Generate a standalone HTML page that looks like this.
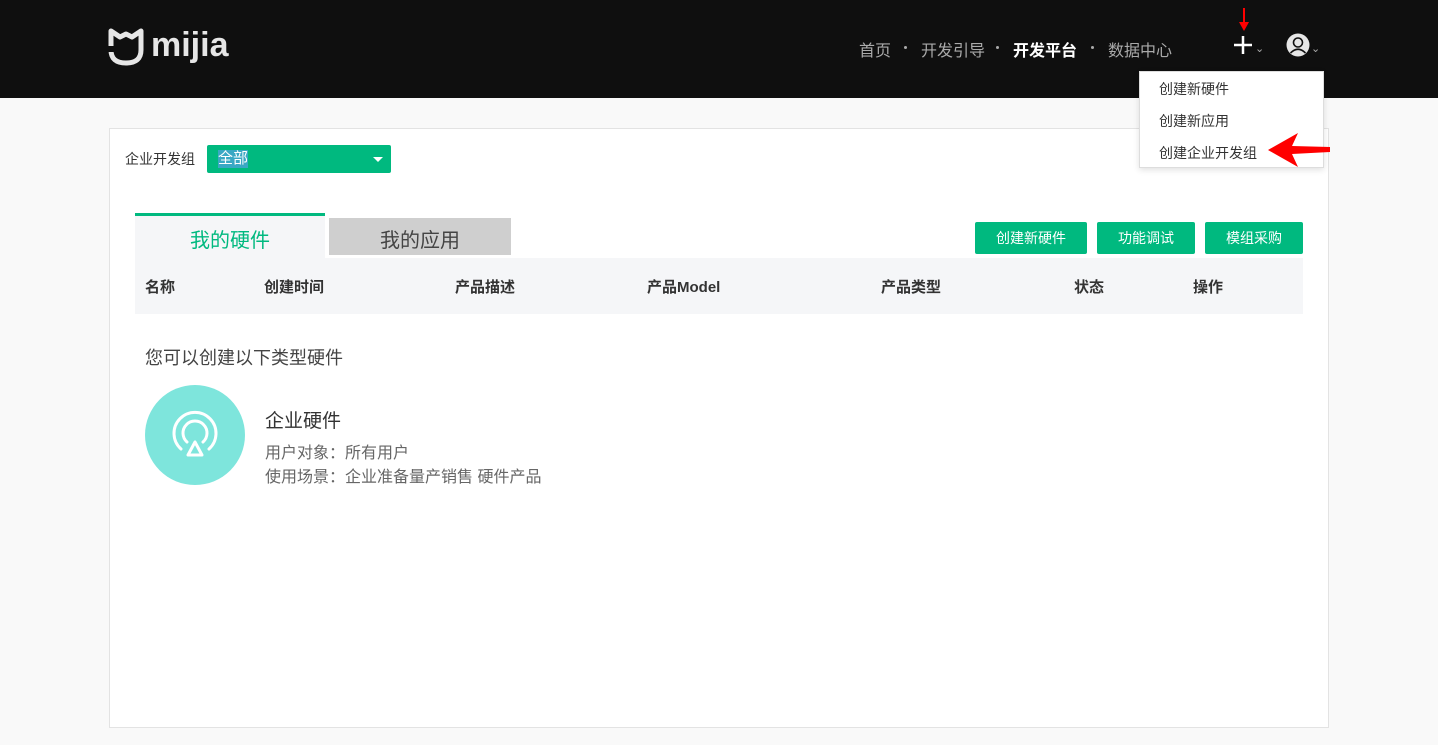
<!DOCTYPE html>
<html><head><meta charset="utf-8"><style>
*{margin:0;padding:0;box-sizing:border-box}
body{width:1438px;height:745px;background:#f9f9f9;font-family:"Liberation Sans","Noto Sans CJK SC",sans-serif;position:relative;overflow:hidden;color:#333}
.hdr{position:absolute;left:0;top:0;width:1438px;height:98px;background:#0f0f0f}
.abs{position:absolute}
.nav{color:#aaa;font-size:16px;top:37px}
.card{position:absolute;left:109px;top:128px;width:1220px;height:600px;background:#fff;border:1px solid #e3e3e3}
.btn{position:absolute;top:222px;height:32px;background:#00b97f;color:#fff;font-size:14px;text-align:center;line-height:32px;border-radius:2px}
.th{position:absolute;top:276px;font-size:15px;font-weight:bold;color:#333}
.dot{position:absolute;top:46px;width:3px;height:3px;border-radius:50%;background:#aaa}
</style></head><body>
<div class="hdr">
<svg class="abs" style="left:108px;top:28px" width="36" height="38" viewBox="0 0 36 38"><path d="M3 3 L12 9 L18 6 L24 9 L33 3 L33 22 Q33 35 18 35 Q3 35 3 22 Z" fill="none" stroke="#e6e6e6" stroke-width="5" stroke-linejoin="round"/><rect x="0" y="18" width="10" height="6" fill="#0f0f0f"/></svg>
<div class="abs" style="left:151px;top:26px;color:#e6e6e6;font-size:34px;font-weight:bold">mijia</div>
<div class="abs nav" style="left:859px">首页</div>
<div class="dot" style="left:904px"></div>
<div class="abs nav" style="left:921px">开发引导</div>
<div class="dot" style="left:996px"></div>
<div class="abs nav" style="left:1013px;color:#fff;font-weight:bold">开发平台</div>
<div class="dot" style="left:1091px"></div>
<div class="abs nav" style="left:1108px">数据中心</div>
<svg class="abs" style="left:1233px;top:35px" width="20" height="20"><path d="M10 1 V19 M1 10 H19" stroke="#fff" stroke-width="2.5"/></svg>
<div class="abs" style="left:1255px;top:42px;color:#aaa;font-size:11px">⌄</div>
<svg class="abs" style="left:1286px;top:33px" width="24" height="24" viewBox="0 0 24 24"><circle cx="12" cy="12" r="11.5" fill="#e6e6e6"/><circle cx="12" cy="9.5" r="4.5" fill="none" stroke="#0f0f0f" stroke-width="1.6"/><path d="M4.5 20 Q12 12.5 19.5 20" fill="none" stroke="#0f0f0f" stroke-width="1.6"/></svg>
<div class="abs" style="left:1311px;top:42px;color:#aaa;font-size:11px">⌄</div>
<svg class="abs" style="left:1238px;top:8px" width="12" height="24"><path d="M6 0 V16" stroke="#f00" stroke-width="2"/><path d="M1 14 L6 23 L11 14Z" fill="#f00"/></svg>
</div>
<div class="card"></div>
<div class="abs" style="left:1139px;top:71px;width:185px;height:97px;background:#fff;border:1px solid #ddd;box-shadow:0 2px 6px rgba(0,0,0,.12)"></div>
<div class="abs" style="left:1159px;top:79px;font-size:14px;color:#333">创建新硬件</div>
<div class="abs" style="left:1159px;top:111px;font-size:14px;color:#333">创建新应用</div>
<div class="abs" style="left:1159px;top:143px;font-size:14px;color:#333">创建企业开发组</div>
<svg class="abs" style="left:1268px;top:133px" width="62" height="34"><path d="M0 17 L30 0 L24 13 L62 14 L62 19 L24 21 L30 34Z" fill="#f00"/></svg>
<div class="abs" style="left:125px;top:149px;font-size:14px">企业开发组</div>
<div class="abs" style="left:207px;top:145px;width:184px;height:28px;background:#00b97f;border-radius:2px"></div>
<div class="abs" style="left:218px;top:150px;font-size:15px;color:#fff;background:#3aa8c4;line-height:18px">全部</div>
<div class="abs" style="left:373px;top:157px;width:0;height:0;border-left:5px solid transparent;border-right:5px solid transparent;border-top:5px solid #fff"></div>
<div class="abs" style="left:135px;top:213px;width:190px;height:45px;background:#f5f6f8;border-top:3px solid #00b97f"></div>
<div class="abs" style="left:190px;top:224px;font-size:20px;color:#00b97f">我的硬件</div>
<div class="abs" style="left:329px;top:218px;width:182px;height:37px;background:#cfcfcf"></div>
<div class="abs" style="left:380px;top:224px;font-size:20px;color:#444">我的应用</div>
<div class="btn" style="left:975px;width:112px">创建新硬件</div>
<div class="btn" style="left:1097px;width:98px">功能调试</div>
<div class="btn" style="left:1205px;width:98px">模组采购</div>
<div class="abs" style="left:135px;top:258px;width:1168px;height:56px;background:#f5f6f8"></div>
<div class="th" style="left:145px">名称</div>
<div class="th" style="left:264px">创建时间</div>
<div class="th" style="left:455px">产品描述</div>
<div class="th" style="left:647px">产品Model</div>
<div class="th" style="left:881px">产品类型</div>
<div class="th" style="left:1074px">状态</div>
<div class="th" style="left:1193px">操作</div>
<div class="abs" style="left:145px;top:344px;font-size:18px;color:#444">您可以创建以下类型硬件</div>
<svg class="abs" style="left:145px;top:385px" width="100" height="100" viewBox="0 0 100 100"><circle cx="50" cy="50" r="50" fill="#7ee5dc"/><path d="M36 64 A21 21 0 1 1 64 64" fill="none" stroke="#fff" stroke-width="3" stroke-linecap="round"/><path d="M42 57 A12 12 0 1 1 58 57" fill="none" stroke="#fff" stroke-width="3" stroke-linecap="round"/><path d="M50 57 L43 70 L57 70Z" fill="none" stroke="#fff" stroke-width="3" stroke-linejoin="round"/></svg>
<div class="abs" style="left:265px;top:406px;font-size:19px;color:#333">企业硬件</div>
<div class="abs" style="left:265px;top:439px;font-size:16px;color:#666">用户对象：所有用户</div>
<div class="abs" style="left:265px;top:463px;font-size:16px;color:#666">使用场景：企业准备量产销售 硬件产品</div>
</body></html>
